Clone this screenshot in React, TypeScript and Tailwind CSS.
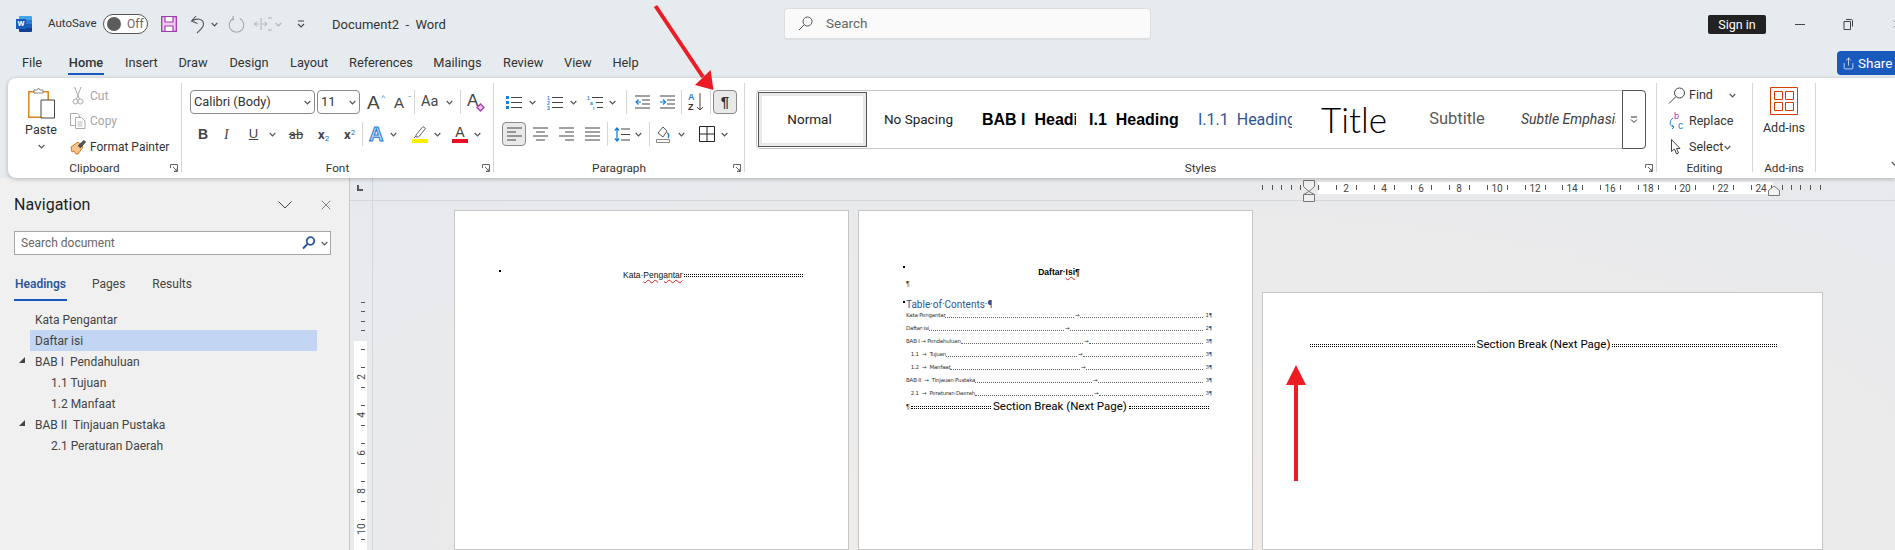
import { Share, X } from 'lucide-react';
import type { ReactNode } from 'react';

const ink = '#404040';

function Chev({ className = '', color = '#555' }: { className?: string; color?: string }) {
  return (
    <svg width="7" height="5" viewBox="0 0 7 5" className={`shrink-0 ${className}`}>
      <path d="M.7 1 3.5 3.8 6.3 1" fill="none" stroke={color} strokeWidth="1.2" />
    </svg>
  );
}

function Launcher({ className = '' }: { className?: string }) {
  return (
    <svg width="8" height="8" viewBox="0 0 8 8" className={className}>
      <path d="M.5 4V.5h7v7H4M3 3l4 4M7 4.5V7H4.5" fill="none" stroke="#666" strokeWidth="1" />
    </svg>
  );
}

function WordIcon() {
  return (
    <div className="relative w-[16px] h-[16px] ml-[16px] shrink-0">
      <div className="absolute left-[3px] top-0 w-[13px] h-[16px] rounded-[1px] bg-[linear-gradient(180deg,#41a5ee_0_25%,#2b7cd3_25%_50%,#185abd_50%_75%,#103f91_75%)]" />
      <div className="absolute left-0 top-[3px] w-[10px] h-[10px] bg-[#185abd] text-white text-[8px] leading-[10px] font-bold text-center">W</div>
    </div>
  );
}

function SaveIcon() {
  return (
    <svg width="16" height="16" viewBox="0 0 16 16" className="ml-[13px] shrink-0">
      <path d="M.7.7h14.6v14.6H.7z" fill="#f0c9f2" stroke="#a23cb0" strokeWidth="1.3" />
      <path d="M4 1v5h8V1M4 15v-5h8v5" fill="#fff" stroke="#a23cb0" strokeWidth="1.2" />
    </svg>
  );
}

function UndoIcon() {
  return (
    <svg width="15" height="19" viewBox="0 0 15 19" className="ml-[13px] shrink-0">
      <path d="M6 1 1.5 6l6 2.5M1.8 6C6 3 13.5 3.5 13.5 9c0 4-3.5 6-6.5 9" fill="none" stroke="#555" strokeWidth="1.1" />
    </svg>
  );
}

function RedoIcon() {
  return (
    <svg width="17" height="19" viewBox="0 0 17 19" className="ml-[10px] shrink-0">
      <path d="M5 3.5a7.3 7.3 0 1 0 7 0M5 1l.5 3.5L2 5.5" fill="none" stroke="#a8a8a8" strokeWidth="1.1" />
    </svg>
  );
}

function RepeatIcon() {
  return (
    <svg width="18" height="14" viewBox="0 0 18 14" className="ml-[9px] shrink-0">
      <path d="M5 7H0M3 4.500.5 7 3 9.500M8 7h5M10.500 4.500 13 7l-2.500 2.500M7 1v12M14 1h4M14 13h4" fill="none" stroke="#aeb2b5" strokeWidth="1" />
    </svg>
  );
}

function TitleBar() {
  return (
    <div className="flex items-center h-[48px] shrink-0">
      <WordIcon />
      <span className="ml-[16px] w-[48px] shrink-0 text-[11.5px] whitespace-nowrap text-[#333]">AutoSave</span>
      <div className="ml-[7px] w-[45px] h-[20px] shrink-0 rounded-full border border-[#555] bg-white flex items-center">
        <div className="ml-[3px] w-[14px] h-[14px] rounded-full bg-[#5c5c5c]" />
        <span className="ml-[6px] text-[12px] text-[#666]">Off</span>
      </div>
      <SaveIcon />
      <UndoIcon />
      <Chev className="ml-[6px]" />
      <RedoIcon />
      <RepeatIcon />
      <Chev className="ml-[3px]" color="#b5b5b5" />
      <svg width="10" height="9" viewBox="0 0 10 9" className="ml-[14px] shrink-0">
        <path d="M2 1h6M2 4l3 3 3-3" fill="none" stroke="#444" strokeWidth="1.1" />
      </svg>
      <span className="ml-[26px] w-[108px] shrink-0 text-[13px] whitespace-pre text-[#333] mt-[2px]">Document2  -  Word</span>
      <div className="ml-[344px] w-[367px] h-[32px] shrink-0 rounded-[4px] bg-[#fafafa] border border-[#dcdfe1] border-b-2 flex items-center">
        <svg width="15" height="15" viewBox="0 0 15 15" className="ml-[13px]">
          <circle cx="9.500" cy="5.500" r="4.500" fill="none" stroke="#555" strokeWidth="1" />
          <path d="M6.200 8.800 1 14" stroke="#555" strokeWidth="1" />
        </svg>
        <span className="ml-[13px] text-[13.500px] text-[#666]">Search</span>
      </div>
      <div className="ml-[557px] w-[58px] h-[19px] shrink-0 bg-[#222] rounded-[2px] text-white text-[12.500px] leading-[19px] text-center">Sign in</div>
      <div className="ml-[29px] w-[10px] h-px shrink-0 bg-[#444]" />
      <svg width="10" height="11" viewBox="0 0 10 11" className="ml-[38px] shrink-0">
        <path d="M1 2.500h6.500v8H1zM3 .5h5.500a1 1 0 0 1 1 1v6" fill="none" stroke="#444" strokeWidth="1" />
      </svg>
      <X size={12} strokeWidth={1.2} color="#444" className="ml-[38px] shrink-0" />
    </div>
  );
}

const tabs = [
  { label: 'File', cls: 'w-[19px] mr-[6px] border-transparent' },
  { label: 'Home', cls: 'w-[36px] border-[#185abd] font-medium text-[#222]' },
  { label: 'Insert', cls: 'w-[32px] border-transparent' },
  { label: 'Draw', cls: 'w-[30px] border-transparent' },
  { label: 'Design', cls: 'w-[40px] border-transparent' },
  { label: 'Layout', cls: 'w-[38px] border-transparent' },
  { label: 'References', cls: 'w-[63px] border-transparent' },
  { label: 'Mailings', cls: 'w-[49px] border-transparent' },
  { label: 'Review', cls: 'w-[40px] border-transparent' },
  { label: 'View', cls: 'w-[27px] border-transparent' },
  { label: 'Help', cls: 'w-[27px] border-transparent' },
];

function TabBar() {
  return (
    <div className="flex items-start h-[30px] shrink-0 pl-[22px] gap-[21px]">
      {tabs.map((t) => (
        <div key={t.label} className={`h-[27px] pt-[5px] leading-[20px] text-[12.8px] text-center whitespace-nowrap text-[#333] border-b-2 ${t.cls}`}>
          <span className="inline-block">{t.label}</span>
        </div>
      ))}
      <div className="ml-auto mt-[3px] w-[58px] h-[24px] bg-[#185abd] rounded-l-[4px] flex items-center text-white text-[13.500px]">
        <Share size={13} strokeWidth={1.3} className="ml-[5px]" />
        <span className="ml-[3px]">Share</span>
      </div>
    </div>
  );
}

function Group({ width, label, launcher, children }: { width: string; label: string; launcher?: boolean; children: ReactNode }) {
  return (
    <div className={`relative h-[89px] shrink-0 border-r border-[#d6d6d6] flex flex-col ${width}`}>
      <div className="h-[79px]">{children}</div>
      <div className="h-[10px] leading-[13px] text-center text-[11.8px] text-[#333] whitespace-nowrap">{label}</div>
      {launcher && <Launcher className="absolute right-[3px] bottom-0" />}
    </div>
  );
}

function Cut() {
  return (
    <svg width="12" height="18" viewBox="0 0 12 18">
      <path d="M2.500 0 7.500 12M9 0 4.500 12" stroke="#aaa" fill="none" />
      <circle cx="3.500" cy="14.500" r="2.500" fill="none" stroke="#aaa" />
      <circle cx="8.500" cy="14.500" r="2.500" fill="none" stroke="#aaa" />
    </svg>
  );
}

function Copy() {
  return (
    <svg width="16" height="16" viewBox="0 0 16 16">
      <path d="M.5.5h7l2 2v2M.5.5v12h4" fill="none" stroke="#aaa" />
      <path d="M5.500 4.500h6l3.500 3.500v7.500H5.500z" fill="#fff" stroke="#aaa" />
      <path d="M7.500 9h5M7.500 11h5M7.500 13h5" stroke="#bbb" />
    </svg>
  );
}

function Painter() {
  return (
    <svg width="17" height="16" viewBox="0 0 17 16">
      <path d="M1 8 8 3l5 5-5 7H6L4 12l-2 1z" fill="#f6c48d" stroke="#d9741a" />
      <path d="M8 7 14 1.500l1.500 1.500L10 9" fill="#555" stroke="#444" />
    </svg>
  );
}

function Clipboard() {
  return (
    <Group width="w-[174px]" label="Clipboard" launcher>
      <div className="flex h-full">
        <div className="ml-[14px] w-[38px] flex flex-col items-center">
          <svg width="27" height="32" viewBox="0 0 27 32" className="mt-[4px]">
            <path d="M.8 4.800h19.400v25.400H.8z" fill="#fff" stroke="#d9851d" strokeWidth="1.500" />
            <path d="M6 6V3h3l1.500-2 1.500 2h3v3z" fill="#fff" stroke="#888" />
            <path d="M13 13h13.500v18H13z" fill="#fff" stroke="#444" />
          </svg>
          <span className="mt-[3px] text-[12.500px] leading-[16px] text-[#333]">Paste</span>
          <Chev className="mt-[6px]" />
        </div>
        <div className="ml-[8px] flex flex-col text-[12px]">
          <div className="h-[25px] flex items-center text-[#a6a6a6]">
            <div className="w-[20px] flex justify-center"><Cut /></div>
            <span className="ml-[2px]">Cut</span>
          </div>
          <div className="h-[26px] flex items-center text-[#a6a6a6]">
            <div className="w-[20px] flex justify-center"><Copy /></div>
            <span className="ml-[2px]">Copy</span>
          </div>
          <div className="h-[26px] flex items-center text-[#333]">
            <div className="w-[20px] flex justify-center"><Painter /></div>
            <span className="ml-[2px] whitespace-nowrap">Format Painter</span>
          </div>
        </div>
      </div>
    </Group>
  );
}

function VLine({ className = '' }: { className?: string }) {
  return <div className={`w-px h-[24px] shrink-0 bg-[#d6d6d6] ${className}`} />;
}

function Combo({ label, width, className = '' }: { label: string; width: string; className?: string }) {
  return (
    <div className={`h-[24px] shrink-0 rounded-[4px] border border-[#8a8a8a] bg-white flex items-center justify-between px-[3px] text-[12.8px] text-[#333] ${width} ${className}`}>
      <span className="whitespace-nowrap">{label}</span>
      <Chev />
    </div>
  );
}

function FontGroup() {
  return (
    <Group width="w-[312px]" label="Font" launcher>
      <div className="pt-[7px] text-[#444]">
        <div className="flex items-center h-[24px] pl-[8px]">
          <Combo label="Calibri (Body)" width="w-[125px]" />
          <Combo label="11" width="w-[43px]" className="ml-[2px]" />
          <span className="ml-[7px] w-[15px] text-[19px] leading-none font-['Liberation_Sans',sans-serif] relative">A<span className="absolute -right-[3px] top-[1px] text-[8px] text-[#1f6fc2]">^</span></span>
          <span className="ml-[12px] w-[15px] text-[15px] leading-none font-['Liberation_Sans',sans-serif] relative">A<span className="absolute -right-[2px] top-0 text-[8px] text-[#1f6fc2]">ˇ</span></span>
          <VLine className="ml-[5px]" />
          <span className="ml-[6px] w-[23px] text-[14.500px] leading-none whitespace-nowrap">Aa</span>
          <Chev className="ml-[2px]" />
          <VLine className="ml-[7px]" />
          <div className="ml-[6px] w-[16px] h-[20px] relative shrink-0">
            <span className="absolute left-0 top-0 text-[17px] leading-none font-['Liberation_Sans',sans-serif]">A</span>
            <svg width="9" height="9" viewBox="0 0 9 9" className="absolute right-[-2px] bottom-0">
              <path d="M4.500 1 8 4.500 4.500 8 1 4.500z" fill="#eec4f0" stroke="#a23cb0" strokeWidth="1.300" />
            </svg>
          </div>
        </div>
        <div className="flex items-center h-[24px] mt-[8px] pl-[16px]">
          <span className="w-[8px] text-[14px] font-bold font-['Liberation_Sans',sans-serif]">B</span>
          <span className="ml-[18px] w-[8px] text-[14px] italic font-['Liberation_Serif',serif]">I</span>
          <span className="ml-[16px] w-[11px] text-[13px] underline font-['Liberation_Sans',sans-serif] text-center">U</span>
          <Chev className="ml-[10px]" />
          <span className="ml-[12px] w-[16px] text-[13px] line-through text-center leading-none">ab</span>
          <span className="ml-[14px] w-[10px] text-[13px] font-bold leading-none whitespace-nowrap">x<sub className="text-[8px] font-normal text-[#1f6fc2]">2</sub></span>
          <span className="ml-[16px] w-[12px] text-[13px] font-bold leading-none whitespace-nowrap">x<sup className="text-[8px] font-normal text-[#1f6fc2]">2</sup></span>
          <VLine className="ml-[6px]" />
          <span className="ml-[6px] w-[16px] text-[20px] leading-none font-bold text-[#b9dcf7] [-webkit-text-stroke:1px_#1f78d1] font-['Liberation_Sans',sans-serif]">A</span>
          <Chev className="ml-[5px]" />
          <div className="ml-[15px] w-[16px] flex flex-col items-center shrink-0">
            <svg width="14" height="14" viewBox="0 0 14 14">
              <path d="M3 10 10 1.500l2.500 2L5.500 12H3zM1 13l2-2" fill="#fff" stroke="#666" />
            </svg>
            <div className="w-[16px] h-[4px] bg-[#ffee00]" />
          </div>
          <Chev className="ml-[6px]" />
          <div className="ml-[11px] w-[16px] flex flex-col items-center shrink-0">
            <span className="text-[14px] leading-[14px] font-['Liberation_Sans',sans-serif]">A</span>
            <div className="w-[16px] h-[4px] bg-[#e81123]" />
          </div>
          <Chev className="ml-[6px]" />
        </div>
      </div>
    </Group>
  );
}

function ListIcon({ kind }: { kind: 'bullet' | 'number' | 'multi' }) {
  return (
    <svg width="17" height="15" viewBox="0 0 17 15" className="shrink-0">
      {kind === 'bullet' && (
        <path d="M0 1h3v3H0zM0 6h3v3H0zM0 11h3v3H0z" fill="#1a7fd6" />
      )}
      {kind !== 'bullet' && (
        <g fill="#1a7fd6" fontSize="5" fontFamily="Liberation Sans" fontWeight="700">
          <text x="0" y="5">1</text>
          <text x={kind === 'multi' ? 3 : 0} y="10">{kind === 'multi' ? 'a' : '2'}</text>
          <text x={kind === 'multi' ? 6 : 0} y="15">{kind === 'multi' ? 'i' : '3'}</text>
        </g>
      )}
      <path d={kind === 'multi' ? 'M5 2.500h11M9 7.500h7M10 12.500h6' : 'M5 2.500h11M5 7.500h11M5 12.500h11'} stroke="#444" strokeWidth="1.100" />
    </svg>
  );
}

function IndentIcon({ flip }: { flip?: boolean }) {
  return (
    <svg width="15" height="14" viewBox="0 0 15 14" className="shrink-0">
      <path d="M0 1h15M7 5h8M7 9h8M0 13h15" stroke="#444" />
      {flip ? (
        <path d="M0 7h5M3 4.500 5.500 7 3 9.500" fill="none" stroke="#1a7fd6" strokeWidth="1.200" />
      ) : (
        <path d="M6 7H1M3.500 4.500 1 7l2.500 2.500" fill="none" stroke="#1a7fd6" strokeWidth="1.200" />
      )}
    </svg>
  );
}

function AlignIcon({ d }: { d: string }) {
  return (
    <svg width="15" height="14" viewBox="0 0 15 14" className="shrink-0">
      <path d={d} stroke="#444" strokeWidth="1.100" />
    </svg>
  );
}

function ParagraphGroup() {
  return (
    <Group width="w-[251px]" label="Paragraph" launcher>
      <div className="pt-[7px]">
        <div className="flex items-center h-[24px] pl-[12px]">
          <ListIcon kind="bullet" />
          <Chev className="ml-[6px]" />
          <div className="ml-[11px]"><ListIcon kind="number" /></div>
          <Chev className="ml-[6px]" />
          <div className="ml-[10px]"><ListIcon kind="multi" /></div>
          <Chev className="ml-[5px]" />
          <VLine className="ml-[10px]" />
          <div className="ml-[8px]"><IndentIcon /></div>
          <div className="ml-[10px]"><IndentIcon flip /></div>
          <VLine className="ml-[6px]" />
          <div className="ml-[6px] w-[17px] h-[20px] shrink-0 flex">
            <div className="flex flex-col text-[9px] leading-[10px] font-['Liberation_Sans',sans-serif] font-bold">
              <span className="text-[#1a7fd6]">A</span>
              <span className="text-[#333]">Z</span>
            </div>
            <svg width="8" height="20" viewBox="0 0 8 20" className="ml-[1px]">
              <path d="M4 1v17M1 15l3 3 3-3" fill="none" stroke="#444" />
            </svg>
          </div>
          <VLine className="ml-[5px]" />
          <div className="ml-[2px] w-[24px] h-[24px] shrink-0 rounded-[4px] border border-[#8a8a8a] bg-[#e9e9e9] flex items-center justify-center text-[15px] font-bold text-[#333] font-['Liberation_Sans',sans-serif]">¶</div>
        </div>
        <div className="flex items-center h-[24px] mt-[8px] pl-[8px]">
          <div className="w-[24px] h-[24px] shrink-0 rounded-[4px] border border-[#8a8a8a] bg-[#e9e9e9] flex items-center justify-center">
            <AlignIcon d="M0 1h15M0 5h9M0 9h15M0 13h9" />
          </div>
          <div className="ml-[7px]"><AlignIcon d="M0 1h15M3 5h9M0 9h15M3 13h9" /></div>
          <div className="ml-[11px]"><AlignIcon d="M0 1h15M6 5h9M0 9h15M6 13h9" /></div>
          <div className="ml-[11px]"><AlignIcon d="M0 1h15M0 5h15M0 9h15M0 13h15" /></div>
          <VLine className="ml-[7px]" />
          <svg width="16" height="15" viewBox="0 0 16 15" className="ml-[6px] shrink-0">
            <path d="M3 1v13M.8 3.500 3 1l2.200 2.500M.8 11.500 3 14l2.200-2.500" fill="none" stroke="#1a7fd6" strokeWidth="1.300" />
            <path d="M7 2h9M7 7.500h9M7 13h9" stroke="#444" />
          </svg>
          <Chev className="ml-[5px]" />
          <VLine className="ml-[7px]" />
          <svg width="16" height="17" viewBox="0 0 16 17" className="ml-[6px] shrink-0">
            <path d="M7 1 2 7l5 4 4-6z" fill="#fff" stroke="#555" />
            <path d="M11 7c2 0 2 4 1 5" fill="none" stroke="#1a7fd6" strokeWidth="1.500" />
            <path d="M.5 13.500h13v3H.5z" fill="#fff" stroke="#888" />
          </svg>
          <Chev className="ml-[6px]" />
          <svg width="16" height="16" viewBox="0 0 16 16" className="ml-[14px] shrink-0">
            <path d="M.5.5h15v15H.5zM8 .5v15M.5 8h15" fill="none" stroke="#222" />
          </svg>
          <Chev className="ml-[6px]" />
        </div>
      </div>
    </Group>
  );
}

const styleCells = [
  { label: 'No Spacing', cls: 'w-[110px] justify-center pr-[7px] text-[13.500px] text-[#222]', inner: '' },
  { label: 'BAB I  Heading 1', cls: 'w-[107px] pl-[5px] text-[16px] font-bold text-black font-["Liberation_Sans",sans-serif]', inner: 'w-[94px]' },
  { label: 'I.1  Heading 2', cls: 'w-[108px] pl-[5px] text-[16px] font-bold text-black font-["Liberation_Sans",sans-serif]', inner: 'w-[93px]' },
  { label: 'I.1.1  Heading 3', cls: 'w-[108px] pl-[6px] text-[16px] text-[#2f5496]', inner: 'w-[94px]' },
  { label: 'Title', cls: 'w-[108px] justify-center text-[35px] font-light text-black font-["Lato",sans-serif]', inner: '' },
  { label: 'Subtitle', cls: 'w-[108px] justify-center pr-[10px] text-[16.500px] text-[#5a5a5a]', inner: '' },
  { label: 'Subtle Emphasis', cls: 'w-[100px] pl-[5px] text-[14px] italic text-[#404040]', inner: 'w-[95px]' },
];

function StylesGroup() {
  return (
    <Group width="w-[912px]" label="Styles" launcher>
      <div className="pt-[7px] pl-[11px]">
        <div className="w-[890px] h-[59px] rounded-[4px] border border-[#c6c6c6] flex items-stretch">
          <div className="w-[109px] shrink-0 border border-[#555] bg-white ml-px my-px">
            <div className="h-full border-[3px] border-[#e8e8e8] flex items-center justify-center pr-[6px] text-[13.500px] text-[#222]">Normal</div>
          </div>
          {styleCells.map((s) => (
            <div key={s.label} className={`shrink-0 flex items-center overflow-hidden whitespace-pre ${s.cls}`}>
              <span className={`block overflow-hidden ${s.inner}`}>{s.label}</span>
            </div>
          ))}
          <div className="ml-auto w-[24px] -my-px -mr-px shrink-0 rounded-r-[4px] border border-[#555] bg-white flex justify-center pt-[25px]">
            <svg width="8" height="8" viewBox="0 0 8 8">
              <path d="M1 1h6M1 3.500 4 6.500 7 3.500" fill="none" stroke="#333" />
            </svg>
          </div>
        </div>
      </div>
    </Group>
  );
}

function EditingGroup() {
  return (
    <Group width="w-[96px]" label="Editing">
      <div className="pl-[11px] text-[12.500px] text-[#333] flex flex-col">
        <div className="h-[25px] flex items-center">
          <svg width="18" height="17" viewBox="0 0 18 17" className="shrink-0">
            <circle cx="11.500" cy="6" r="5" fill="none" stroke="#444" />
            <path d="M8 9.500 1 16.500" stroke="#444" />
          </svg>
          <span className="ml-[3px] w-[22px]">Find</span>
          <Chev className="ml-[18px]" />
        </div>
        <div className="h-[26px] flex items-center">
          <svg width="18" height="18" viewBox="0 0 18 18" className="shrink-0">
            <text x="6" y="7" fontSize="9" fill="#a23cb0" fontFamily="Liberation Sans">b</text>
            <text x="10" y="17" fontSize="10" fill="#1a7fd6" fontFamily="Liberation Sans">c</text>
            <path d="M5 6C1 9 1 14 6 15M4 13l2 2-2 2" fill="none" stroke="#1a7fd6" />
          </svg>
          <span className="ml-[3px]">Replace</span>
        </div>
        <div className="h-[26px] flex items-center">
          <svg width="18" height="16" viewBox="0 0 18 16" className="shrink-0">
            <path d="M3.500.5v12l3-2.500 2 5 2-1-2-4.500h3.500z" fill="#fff" stroke="#444" />
          </svg>
          <span className="ml-[3px] w-[31px]">Select</span>
          <Chev className="ml-[4px]" />
        </div>
      </div>
    </Group>
  );
}

function AddIns() {
  return (
    <Group width="w-[63px]" label="Add-ins">
      <div className="flex flex-col items-center pt-[4px]">
        <svg width="28" height="28" viewBox="0 0 28 28">
          <path d="M.5.5h27v27H.5z" fill="#fff" stroke="#d83b01" />
          <path d="M4.500 4.500h8v8h-8zM15.500 4.500h8v8h-8zM4.500 15.500h8v8h-8zM15.500 15.500h8v8h-8z" fill="none" stroke="#d83b01" />
        </svg>
        <span className="mt-[5px] text-[12.500px] leading-[16px] text-[#333] whitespace-nowrap">Add-ins</span>
      </div>
    </Group>
  );
}

function Ribbon() {
  return (
    <div className="relative z-10 ml-[8px] h-[100px] shrink-0 bg-white rounded-l-[8px] shadow-[0_1px_4px_rgba(0,0,0,0.25)] flex pt-[5px]">
      <Clipboard />
      <FontGroup />
      <ParagraphGroup />
      <StylesGroup />
      <EditingGroup />
      <AddIns />
      <div className="flex-1 flex justify-end items-end pb-[12px] -mr-[3px]">
        <Chev />
      </div>
    </div>
  );
}

const navItems = [
  { label: 'Kata Pengantar', cls: 'pl-[35px]' },
  { label: 'Daftar isi', cls: 'pl-[5px] ml-[30px] mr-[32px] bg-[#c2d5f2]', selected: true },
  { label: 'BAB I  Pendahuluan', cls: 'pl-[35px]', caret: true },
  { label: '1.1 Tujuan', cls: 'pl-[51px]' },
  { label: '1.2 Manfaat', cls: 'pl-[51px]' },
  { label: 'BAB II  Tinjauan Pustaka', cls: 'pl-[35px]', caret: true },
  { label: '2.1 Peraturan Daerah', cls: 'pl-[51px]' },
];

function NavPane() {
  return (
    <div className="w-[350px] shrink-0 bg-[#f0f0f0] border-r border-[#c8c8c8] pl-[14px] flex flex-col">
      <div className="flex items-center h-[24px] mt-[15px]">
        <span className="w-[264px] text-[16px] text-[#222]">Navigation</span>
        <svg width="14" height="8" viewBox="0 0 14 8">
          <path d="M.5.5 7 7 13.500.5" fill="none" stroke="#444" />
        </svg>
        <X size={16} strokeWidth={1} color="#444" className="ml-[26px]" />
      </div>
      <div className="w-[317px] h-[24px] mt-[14px] bg-white border border-[#a6a6a6] flex items-center">
        <span className="ml-[6px] w-[280px] text-[12px] text-[#666]">Search document</span>
        <svg width="14" height="14" viewBox="0 0 14 14" className="ml-[1px]">
          <circle cx="8.500" cy="5" r="3.800" fill="none" stroke="#2b579a" strokeWidth="1.800" />
          <path d="M5.500 8 1 12.500" stroke="#2b579a" strokeWidth="2" />
        </svg>
        <Chev className="ml-[5px]" />
      </div>
      <div className="flex h-[34px] mt-[12px] text-[12px] text-[#444]">
        <div className="w-[53px] h-[34px] border-b-2 border-[#185abd] text-[#2b579a] font-semibold pt-[8px] pl-px whitespace-nowrap">Headings</div>
        <div className="ml-[25px] pt-[8px]">Pages</div>
        <div className="ml-[27px] pt-[8px]">Results</div>
      </div>
      <div className="-ml-[14px] mt-[8px] text-[12px] text-[#444]">
        {navItems.map((n) => (
          <div key={n.label} className={`relative h-[21px] leading-[22px] whitespace-pre ${n.cls}`}>
            {n.caret && (
              <svg width="6" height="6" viewBox="0 0 6 6" className="absolute left-[19px] top-[6px]">
                <path d="M6 0v6H0z" fill="#444" />
              </svg>
            )}
            {n.label}
          </div>
        ))}
      </div>
    </div>
  );
}

function HRuler() {
  const nums = Array.from({ length: 12 }, (_, i) => i);
  return (
    <svg width="1522" height="24" viewBox="373 178 1522 24" className="shrink-0 overflow-visible">
      <rect x="1318" y="182" width="455" height="12" fill="#fff" />
      {[1262, 1272, 1281, 1291, 1300, 1782, 1791, 1800, 1810, 1820].map((x) => (
        <path key={x} d={`M${x}.5 185v5`} stroke="#555" />
      ))}
      <path d="M1318.500 185v5" stroke="#555" />
      {nums.map((i) => {
        const x = Math.round(1346 + i * 37.7);
        return (
          <g key={i}>
            <path d={`M${x - 10}.5 185v5M${x + 10}.5 185v5`} stroke="#555" />
            <text x={x} y="192" fontSize="10" fill="#444" textAnchor="middle" fontFamily="Roboto">{(i + 1) * 2}</text>
          </g>
        );
      })}
      <path d="M1303.500 180.500h11v6l-5.500 5 5.500 3v7h-11v-7l5.500-3-5.500-5z" fill="#f0f0f0" stroke="#777" />
      <path d="M1303.500 194.500h11" stroke="#777" />
      <path d="M1768.500 195.500v-5l5.500-4.500 5.500 4.500v5z" fill="#f4f4f4" stroke="#777" />
    </svg>
  );
}

function VRuler() {
  const nums = Array.from({ length: 5 }, (_, i) => i);
  return (
    <svg width="22" height="349" viewBox="350 201 22 349" className="shrink-0">
      <rect x="354" y="341" width="13" height="209" fill="#fff" />
      {[302, 311, 321, 330, 349].map((y) => (
        <path key={y} d={`M361 ${y}.5h4`} stroke="#555" />
      ))}
      {nums.map((i) => {
        const y = 377 + i * 38;
        return (
          <g key={i}>
            <path d={`M361 ${y - 10}.5h4M361 ${y + 10}.5h4`} stroke="#555" />
            <text x="0" y="0" transform={`translate(365 ${y}) rotate(-90)`} fontSize="10" fill="#444" textAnchor="middle" fontFamily="Roboto">{(i + 1) * 2}</text>
          </g>
        );
      })}
    </svg>
  );
}

function Dotted({ className = '' }: { className?: string }) {
  return <div className={`h-[3px] border-y border-dotted border-black ${className}`} />;
}

const tocRows = [
  { label: 'Kata·Pengantar', left: 'w-[168px]', page: '1' },
  { label: 'Daftar·isi', left: 'w-[158px]', page: '2' },
  { label: 'BAB·I → Pendahuluan', left: 'w-[177px]', page: '3' },
  { label: '   1.1  →  Tujuan', left: 'w-[171px]', page: '3' },
  { label: '   1.2  →  Manfaat', left: 'w-[174px]', page: '3' },
  { label: 'BAB·II  →  Tinjauan·Pustaka', left: 'w-[186px]', page: '3' },
  { label: '   2.1  →  Peraturan·Daerah', left: 'w-[187px]', page: '3' },
];

function Leader() {
  return <div className="flex-1 border-b border-dotted border-[#666] mt-[3px] h-0" />;
}

function FirstPage() {
  return (
    <div className="w-[395px] h-[340px] shrink-0 bg-white border border-[#c6c6c6] pl-[44px] pt-[57px]">
      <div className="flex items-center h-[14px] relative">
        <div className="absolute left-0 top-[2px] w-[2px] h-[2px] bg-black" />
        <span className="ml-[124px] text-[8.500px] text-[#111] whitespace-nowrap font-['Liberation_Sans',sans-serif]">
          Kata·<span className="underline decoration-wavy decoration-[#e02020] decoration-1">Pengantar</span>
        </span>
        <Dotted className="w-[119px] ml-[1px]" />
      </div>
    </div>
  );
}

function SecondPage() {
  return (
    <div className="w-[395px] h-[340px] shrink-0 bg-white border border-[#c6c6c6] pl-[47px] pt-[55px] text-[#222] font-['Liberation_Sans',sans-serif]">
      <div className="relative w-[306px] h-[12px] flex justify-center items-center text-[8.500px] font-bold text-black whitespace-nowrap">
        <div className="absolute -left-[3px] top-0 w-[2px] h-[2px] bg-black" />
        <span>Daftar·<span className="underline decoration-wavy decoration-[#e02020] decoration-1">Isi</span>¶</span>
      </div>
      <div className="h-[12px] leading-[12px] text-[7px]">¶</div>
      <div className="relative mt-[10px] h-[10px] leading-[10px] text-[10px] text-[#2f5496] whitespace-nowrap font-['Roboto',sans-serif]">
        <div className="absolute -left-[3px] top-[1px] w-[2px] h-[2px] bg-black" />
        Table·of·Contents·¶
      </div>
      <div className="-mt-px w-[306px] text-[5.500px] text-[#333] font-['DejaVu_Sans',sans-serif] tracking-[-0.2px]">
        {tocRows.map((r) => (
          <div key={r.label} className="flex items-center h-[13px] whitespace-pre">
            <div className={`flex items-center shrink-0 ${r.left}`}>
              <span>{r.label}</span>
              <Leader />
            </div>
            <span className="mx-[1px]">→</span>
            <Leader />
            <span className="ml-[2px]">{r.page}¶</span>
          </div>
        ))}
      </div>
      <div className="w-[303px] h-[14px] flex items-center">
        <span className="text-[7px] mr-[1px]">¶</span>
        <Dotted className="flex-1" />
        <span className="mx-[2px] text-[11.500px] whitespace-nowrap text-black font-['Roboto',sans-serif]">Section Break (Next Page)</span>
        <Dotted className="flex-1" />
      </div>
    </div>
  );
}

function ThirdPage() {
  return (
    <div className="w-[561px] h-[258px] mt-[82px] shrink-0 bg-white border border-[#c6c6c6] pl-[47px] pt-[45px]">
      <div className="w-[467px] h-[14px] flex items-center">
        <Dotted className="flex-1" />
        <span className="mx-[2px] text-[11.500px] whitespace-nowrap text-black">Section Break (Next Page)</span>
        <Dotted className="flex-1" />
      </div>
    </div>
  );
}

function Arrows() {
  return (
    <svg width="1895" height="550" viewBox="0 0 1895 550" className="absolute inset-0 z-20 pointer-events-none">
      <path d="M655.500 6 703 77" stroke="#ed1c24" strokeWidth="4" />
      <path d="M695 85 710.600 70 713.500 90z" fill="#ed1c24" />
      <path d="M1296 481v-98" stroke="#ed1c24" strokeWidth="4" />
      <path d="M1296 365l10 20h-20z" fill="#ed1c24" />
    </svg>
  );
}

export default function App() {
  return (
    <div className="relative w-[1895px] h-[550px] overflow-hidden flex flex-col bg-[#e6ebef] font-['Roboto',sans-serif]" style={{ color: ink }}>
      <TitleBar />
      <TabBar />
      <Ribbon />
      <div className="flex flex-1 min-h-0">
        <NavPane />
        <div className="flex-1 min-w-0 flex flex-col bg-[radial-gradient(ellipse_at_55%_100%,#f2ebe7_0%,#ecebea_45%,#e6e9ee_100%)]">
          <div className="flex h-[23px] shrink-0 border-b border-[#d3d7da]">
            <div className="w-[23px] shrink-0 border-r border-[#d3d7da] pl-[7px] pt-[7px]">
              <div className="w-[6px] h-[6px] border-l-2 border-b-2 border-[#555]" />
            </div>
            <HRuler />
          </div>
          <div className="flex flex-1 min-h-0">
            <div className="w-[23px] shrink-0 border-r border-[#d3d7da]">
              <VRuler />
            </div>
            <div className="flex items-start gap-[9px] pl-[81px] pt-[9px]">
              <FirstPage />
              <SecondPage />
              <ThirdPage />
            </div>
          </div>
        </div>
      </div>
      <Arrows />
    </div>
  );
}
